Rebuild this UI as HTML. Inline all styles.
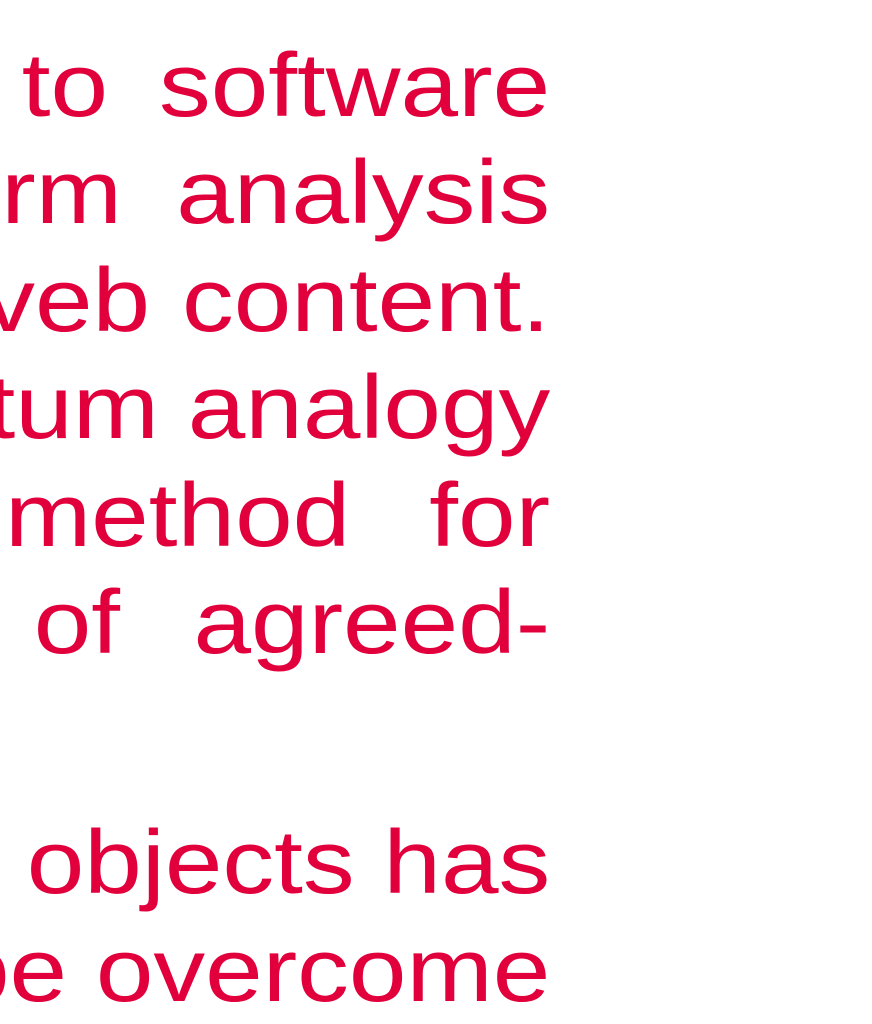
<!DOCTYPE html>
<html><head><meta charset="utf-8"><style>
html,body{margin:0;padding:0;background:#fff;width:872px;height:1024px;overflow:hidden;position:relative}
span{position:absolute;font-family:"Liberation Sans",Arial,sans-serif;font-size:90px;line-height:90px;color:#e2003c;white-space:nowrap;transform:scaleX(1.15);transform-origin:100% 50%}
</style></head><body>
<span style="top:41px;right:764px">to</span><span style="top:41px;right:322px">software</span>
<span style="top:148px;right:750px">rm</span><span style="top:148px;right:322px">analysis</span>
<span style="top:256px;right:722px">veb</span><span style="top:256px;right:322px">content.</span>
<span style="top:363px;right:322px">tum analogy</span>
<span style="top:471px;right:522px">method</span><span style="top:471px;right:322px">for</span>
<span style="top:578px;right:752px">of</span><span style="top:578px;right:322px">agreed-</span>
<span style="top:818px;right:322px">objects has</span>
<span style="top:926px;right:322px">be overcome</span>
</body></html>
